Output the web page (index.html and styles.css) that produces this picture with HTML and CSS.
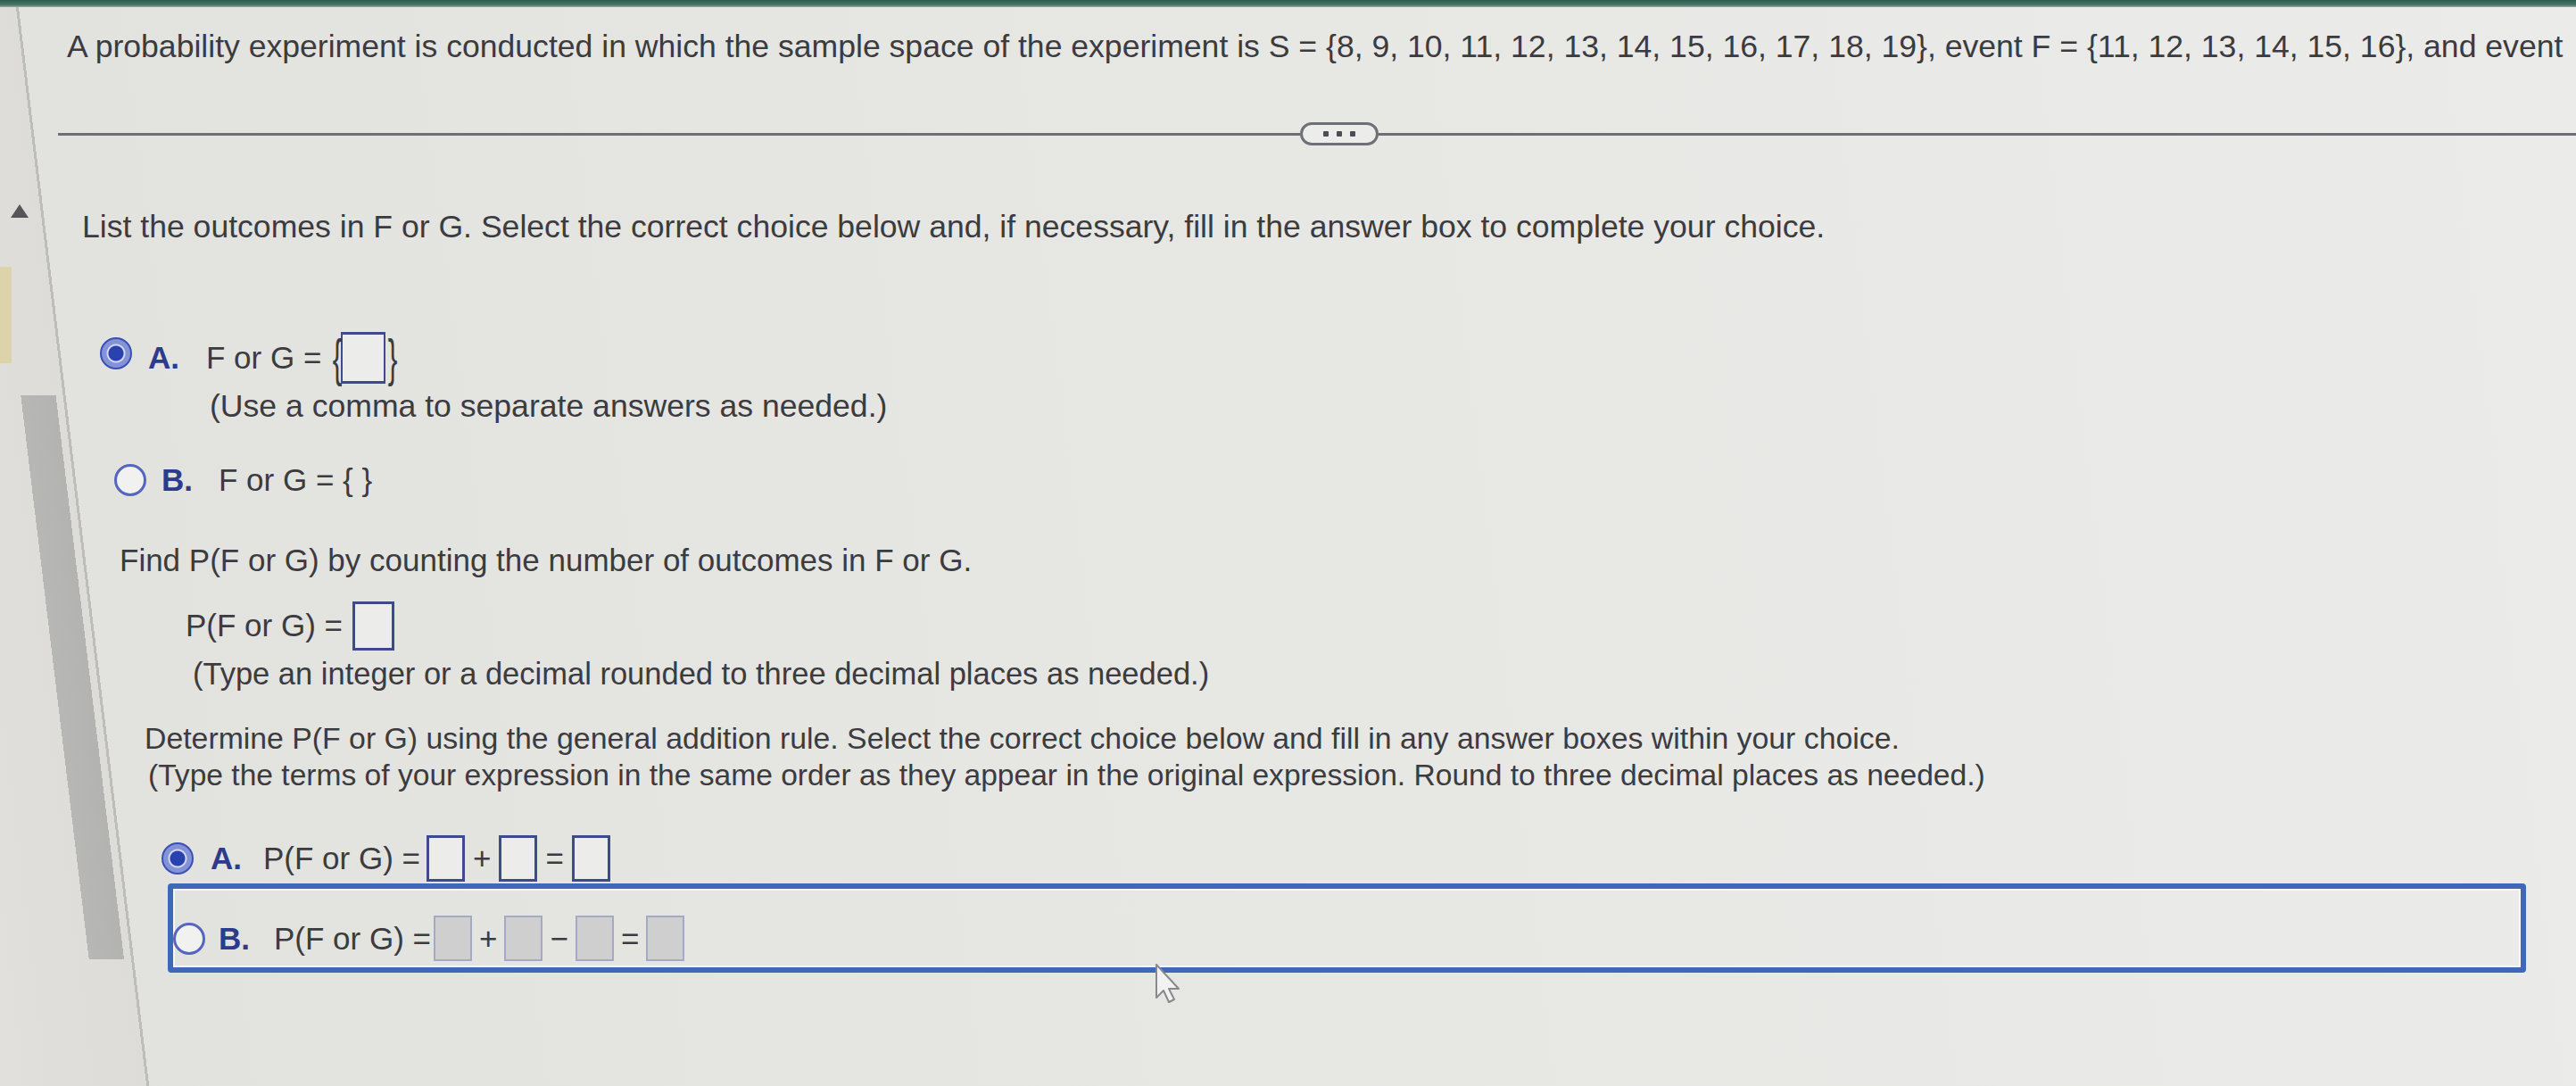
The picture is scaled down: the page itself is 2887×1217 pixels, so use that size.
FILE: index.html
```html
<!DOCTYPE html>
<html lang="en">
<head>
<meta charset="utf-8">
<title>Probability question</title>
<link rel="stylesheet" href="styles.css">
</head>
<body>
<main class="screen">
  <div class="topbar"></div>
  <p class="stem">A probability experiment is conducted in which the sample space of the experiment is S = {8, 9, 10, 11, 12, 13, 14, 15, 16, 17, 18, 19}, event F = {11, 12, 13, 14, 15, 16}, and event</p>
  <div class="divider">
    <span class="rule rule-left"></span>
    <span class="more"><i></i><i></i><i></i></span>
    <span class="rule rule-right"></span>
  </div>

  <div class="part-head">
    <span class="collapse"></span>
    <p class="prompt">List the outcomes in F or G. Select the correct choice below and, if necessary, fill in the answer box to complete your choice.</p>
  </div>

  <div class="choice choice-a1">
    <span class="radio on"></span>
    <span class="letter">A.</span>
    <span class="expr">F or G =</span>
    <span class="setbox"><span class="brace">{</span><span class="box"></span><span class="brace">}</span></span>
  </div>
  <p class="prompt hint-a1">(Use a comma to separate answers as needed.)</p>

  <div class="choice choice-b1">
    <span class="radio"></span>
    <span class="letter">B.</span>
    <span class="expr">F or G = { }</span>
  </div>

  <p class="prompt find">Find P(F or G) by counting the number of outcomes in F or G.</p>
  <div class="answer-row">
    <span class="expr">P(F or G) =</span>
    <span class="box"></span>
  </div>
  <p class="prompt hint-p">(Type an integer or a decimal rounded to three decimal places as needed.)</p>

  <p class="prompt determine">Determine P(F or G) using the general addition rule. Select the correct choice below and fill in any answer boxes within your choice.</p>
  <p class="prompt determine-2">(Type the terms of your expression in the same order as they appear in the original expression. Round to three decimal places as needed.)</p>

  <div class="choice choice-a2">
    <span class="radio on"></span>
    <span class="letter">A.</span>
    <span class="expr">P(F or G) =</span>
    <span class="box first"></span>
    <span class="op">+</span>
    <span class="box"></span>
    <span class="op">=</span>
    <span class="box"></span>
  </div>

  <div class="highlight">
    <div class="choice choice-b2">
      <span class="radio"></span>
      <span class="letter">B.</span>
      <span class="expr">P(F or G) =</span>
      <span class="box off first"></span>
      <span class="op">+</span>
      <span class="box off"></span>
      <span class="op">&minus;</span>
      <span class="box off"></span>
      <span class="op">=</span>
      <span class="box off"></span>
    </div>
  </div>

  <svg class="cursor" viewBox="0 0 28 46" width="28" height="46" aria-hidden="true">
    <path d="M2 2 L2 39 L10 31 L16 44 L22 41 L16 29 L27 29 Z" fill="#f2f2f2" stroke="#8a8a8e" stroke-width="2" stroke-linejoin="round"/>
  </svg>
</main>
</body>
</html>
```

FILE: styles.css
```css
* {
  box-sizing: border-box;
}

html, body {
  margin: 0;
  padding: 0;
  background: #e4e4e1;
}

body {
  font-family: "Liberation Sans", Arial, sans-serif;
  font-size: 35px;
  color: #3b3b40;
}

p {
  margin: 0;
}

.screen {
  display: block;
  position: relative;
  width: 2887px;
  height: 1217px;
  overflow: hidden;
  background:
    linear-gradient(#ddd3ab, #ddd3ab) 0 299px / 13px 108px no-repeat,
    linear-gradient(83.1deg, transparent 99px, #b7b7b5 99px, #b3b3b1 138px, transparent 138px) 0 443px / 100% 632px no-repeat,
    linear-gradient(83.1deg, #e1e0dd 0, #dddcd9 163px, #bdbdbb 163px, #bdbdbb 166px, #e2e2df 166px, #e6e6e3 40%, #ebebe9 100%);
}

.topbar {
  height: 8px;
  background: linear-gradient(#2d5c4c, #4b7868 70%, #97aea3);
}

.stem {
  margin: 24px 0 0 75px;
  line-height: 40px;
  font-size: 35.6px;
  white-space: nowrap;
}

.divider {
  display: flex;
  align-items: center;
  height: 26px;
  margin: 65px 0 0 65px;
}

.rule {
  height: 3px;
  background: #6e6e76;
}

.rule-left {
  width: 1392px;
}

.rule-right {
  flex: 1;
}

.more {
  flex: none;
  width: 88px;
  height: 26px;
  border: 3px solid #6f6f77;
  border-radius: 13px;
  background: #ececea;
  display: flex;
  align-items: center;
  justify-content: center;
  gap: 9px;
}

.more i {
  width: 6px;
  height: 6px;
  background: #4d4d55;
  border-radius: 1px;
}

.part-head {
  display: flex;
  align-items: flex-start;
  margin-top: 66px;
}

.collapse {
  flex: none;
  margin-left: 12px;
  width: 0;
  height: 0;
  border-left: 10px solid transparent;
  border-right: 10px solid transparent;
  border-bottom: 15px solid #56565a;
}

.prompt {
  line-height: 40px;
  white-space: nowrap;
}

.part-head .prompt {
  margin: 5px 0 0 60px;
  font-size: 35.6px;
}

.choice {
  display: flex;
  align-items: center;
}

.radio {
  flex: none;
  width: 36px;
  height: 36px;
  border-radius: 50%;
  border: 3px solid #5565c2;
  background: #f1f1f0;
}

.radio.on {
  border: 2px solid #3b4fb8;
  background: radial-gradient(circle, #2a42b0 0, #2a42b0 8px, #d3d8f0 9px, #d3d8f0 10px, #8493d5 11px);
}

.letter {
  font-weight: bold;
  color: #2e3a8c;
}

.box {
  flex: none;
  display: block;
  border: 3px solid #3d4a8c;
  background: #ececea;
}

.box.off {
  border: 2px solid #a3abc4;
  background: #cfcfcf;
}

.op {
  margin: 0 9px;
}

/* first question choices */
.choice-a1 {
  height: 62px;
  margin: 96px 0 0 112px;
}

.choice-a1 .radio {
  margin-top: -10px;
}

.choice-a1 .letter {
  margin-left: 18px;
}

.choice-a1 .expr {
  margin-left: 30px;
}

.setbox {
  display: flex;
  align-items: center;
  height: 62px;
  margin-left: 10px;
}

.brace {
  display: inline-block;
  width: 12px;
  font-size: 58px;
  line-height: 62px;
  text-align: center;
  transform: scaleX(0.55);
}

.setbox .box {
  width: 50px;
  height: 58px;
  border-width: 3px 2px;
}

.hint-a1 {
  margin: 3px 0 0 235px;
  font-size: 35.6px;
}

.choice-b1 {
  height: 40px;
  margin: 43px 0 0 128px;
}

.choice-b1 .letter {
  margin-left: 17px;
}

.choice-b1 .expr {
  margin-left: 29px;
}

/* counting */
.find {
  margin: 50px 0 0 134px;
}

.answer-row {
  display: flex;
  align-items: center;
  height: 56px;
  margin: 25px 0 0 208px;
}

.answer-row .box {
  width: 47px;
  height: 55px;
  margin-left: 11px;
}

.hint-p {
  margin: 6px 0 0 216px;
  font-size: 34.5px;
}

/* addition rule */
.determine {
  margin: 32px 0 0 162px;
  font-size: 33.8px;
}

.determine-2 {
  margin: 2px 0 0 166px;
  font-size: 33.6px;
}

.choice-a2 {
  height: 52px;
  margin: 47px 0 0 181px;
}

.choice-a2 .letter {
  margin-left: 19px;
}

.choice-a2 .expr {
  margin-left: 24px;
}

.choice-a2 .box {
  width: 43px;
  height: 52px;
}

.choice-a2 .box.first {
  margin-left: 7px;
}

.highlight {
  margin: 2px 0 0 188px;
  width: 2643px;
  border: 6px solid #4068b8;
  border-radius: 4px;
  padding: 30px 0 7px 0;
  box-shadow: inset 0 0 0 2px #f4f6fb;
}

.choice-b2 {
  height: 51px;
}

.choice-b2 .letter {
  margin-left: 15px;
}

.choice-b2 .expr {
  margin-left: 27px;
}

.choice-b2 .box {
  width: 43px;
  height: 51px;
}

.choice-b2 .box.first {
  margin-left: 3px;
}

.choice-b2 .op {
  margin: 0 8px;
}

.cursor {
  position: absolute;
  left: 1294px;
  top: 1079px;
}
```
